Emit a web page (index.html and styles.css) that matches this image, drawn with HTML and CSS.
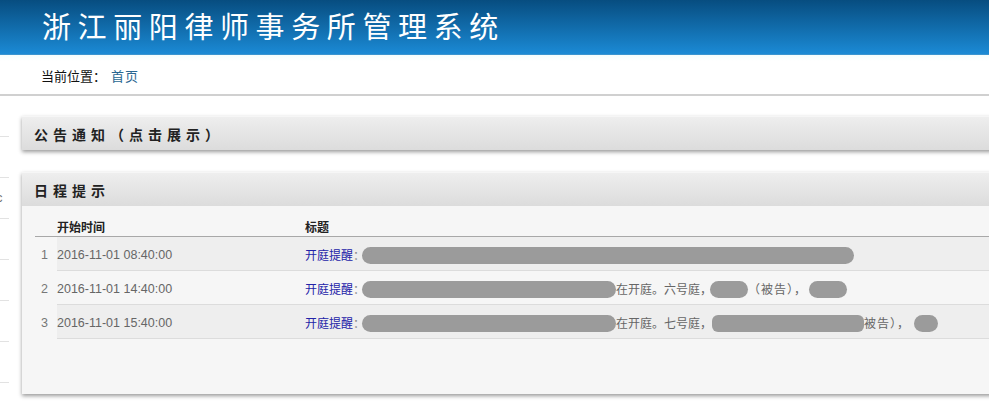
FILE: index.html
```html
<!DOCTYPE html>
<html lang="zh-CN">
<head>
	<meta charset="UTF-8">
	<title>浙江丽阳律师事务所管理系统</title>
	<link rel="stylesheet" href="styles.css">
</head>
<body>
	<div id="top">
		<h1>浙江丽阳律师事务所管理系统</h1>
	</div>

	<div id="crumb">
		<span class="label">当前位置：</span><a href="javascript:;">首页</a>
	</div>

	<div id="layout">
		<!-- 左侧菜单（已收起） -->
		<ul id="side">
			<li></li>
			<li></li>
			<li><span class="fold">c</span></li>
			<li></li>
			<li></li>
			<li></li>
			<li></li>
		</ul>

		<div id="main">
			<div class="panel">
				<div class="panel-hd">公告通知（点击展示）</div>
			</div>

			<div class="panel">
				<div class="panel-hd">日程提示</div>
				<div class="panel-bd">
					<table class="grid">
						<thead>
							<tr>
								<th class="num"></th>
								<th class="time">开始时间</th>
								<th>标题</th>
							</tr>
						</thead>
						<tbody>
							<tr class="odd">
								<td class="num">1</td>
								<td class="time">2016-11-01 08:40:00</td>
								<td><a href="javascript:;">开庭提醒</a><span class="sep">：</span><span class="blur b1"></span></td>
							</tr>
							<tr>
								<td class="num">2</td>
								<td class="time">2016-11-01 14:40:00</td>
								<td><a href="javascript:;">开庭提醒</a><span class="sep">：</span><span class="blur b2"></span>在开庭。六号庭，<span class="blur b3"></span><span class="note">（被告），</span><span class="blur b4"></span></td>
							</tr>
							<tr class="odd">
								<td class="num">3</td>
								<td class="time">2016-11-01 15:40:00</td>
								<td><a href="javascript:;">开庭提醒</a><span class="sep">：</span><span class="blur b2"></span>在开庭。七号庭，<span class="blur b5"></span><span class="note">被告），</span><span class="blur b6"></span></td>
							</tr>
						</tbody>
					</table>
				</div>
			</div>
		</div>
	</div>
</body>
</html>
```

FILE: styles.css
```css
* {
	box-sizing: border-box;
}
body {
	margin: 0;
	background: #fff;
	font-family: "Liberation Sans", "Noto Sans CJK SC", sans-serif;
	font-size: 12px;
	color: #333;
	overflow: hidden;
}
a {
	text-decoration: none;
}

#top {
	height: 55px;
	background: linear-gradient(to bottom, #074d80, #1b8ad5);
	border-bottom: 1px solid #3a94cf;
}
#top h1 {
	margin: 0;
	padding: 6px 0 0 42px;
	font-family: "Noto Sans CJK SC", sans-serif;
	font-weight: normal;
	font-size: 29px;
	line-height: 38px;
	letter-spacing: 6.6px;
	color: #fff;
}

#crumb {
	height: 41px;
	padding: 12px 0 0 41px;
	line-height: 18px;
	background: linear-gradient(to bottom, #f3fdfd, #fff 6px);
	border-bottom: 2px solid #d0d0d0;
	font-family: "Noto Sans CJK SC", sans-serif;
	font-size: 13px;
	color: #111;
}
#crumb .label {
	margin-right: 5px;
}
#crumb a {
	color: #2a6791;
	letter-spacing: 1px;
}

#layout {
	display: flex;
}
#side {
	flex: 0 0 9px;
	margin: 0;
	padding: 0;
	list-style: none;
	overflow: hidden;
}
#side li {
	height: 41px;
	border-bottom: 1px solid #e2e2e2;
	line-height: 40px;
}
#side .fold {
	display: block;
	margin-left: -4px;
	font-size: 13px;
	color: #777;
}

#main {
	flex: 1;
	padding: 20px 0 0 13px;
	margin-right: -20px;
}

.panel {
	margin-bottom: 22px;
	box-shadow: 0 2px 4px rgba(0,0,0,.4);
}
.panel-hd {
	height: 34px;
	padding-left: 12px;
	line-height: 34px;
	background: linear-gradient(to bottom, #eeeeee, #dcdcdc);
	border-top: 1px solid #f6f6f6;
	font-family: "Noto Sans CJK SC", sans-serif;
	font-size: 14px;
	font-weight: bold;
	letter-spacing: 5px;
	color: #222;
}
.panel-bd {
	height: 188px;
	padding: 10px 0 0 13px;
	background: #f6f6f6;
}

.grid {
	width: 100%;
	border-collapse: collapse;
	font-size: 12px;
}
.grid th {
	height: 20px;
	padding: 2px 0 0;
	text-align: left;
	vertical-align: top;
	border-bottom: 1px solid #a8a8a8;
	font-family: "Noto Sans CJK SC", sans-serif;
	font-weight: bold;
	color: #222;
}
.grid td {
	height: 34px;
	padding: 3px 0 0;
	border-bottom: 1px solid #dcdcdc;
	color: #666;
	font-family: "Noto Sans CJK SC", sans-serif;
	white-space: nowrap;
}
.grid .num {
	width: 22px;
	padding-right: 9px;
	text-align: right;
	color: #777;
	border-bottom-color: transparent;
	background: #f6f6f6;
}
.grid th.num {
	border-bottom-color: #a8a8a8;
}
.grid .time {
	width: 248px;
	font-family: "Liberation Sans", sans-serif;
	font-size: 12.5px;
}
.grid th.time {
	font-family: "Noto Sans CJK SC", sans-serif;
	font-size: 12px;
}
.grid td.num {
	font-family: "Liberation Sans", sans-serif;
	font-size: 12.5px;
}
.grid tr.odd td {
	background: #eeeeee;
}
.grid tr.odd td.num {
	background: #f6f6f6;
}
.grid td a {
	color: #2323a8;
}
.sep {
	display: inline-block;
	width: 9px;
	text-align: center;
	color: #888;
}
.note {
	letter-spacing: 1px;
}

.blur {
	display: inline-block;
	height: 17px;
	border-radius: 9px;
	background: #9b9b9b;
	vertical-align: -4px;
}
.b1 { width: 492px; }
.b2 { width: 254px; }
.b3 { width: 38px; margin-left: -2px; }
.b4 { width: 38px; margin-left: 2px; }
.b5 { width: 152px; border-radius: 6px; }
.b6 { width: 24px; margin-left: 4px; }
```
